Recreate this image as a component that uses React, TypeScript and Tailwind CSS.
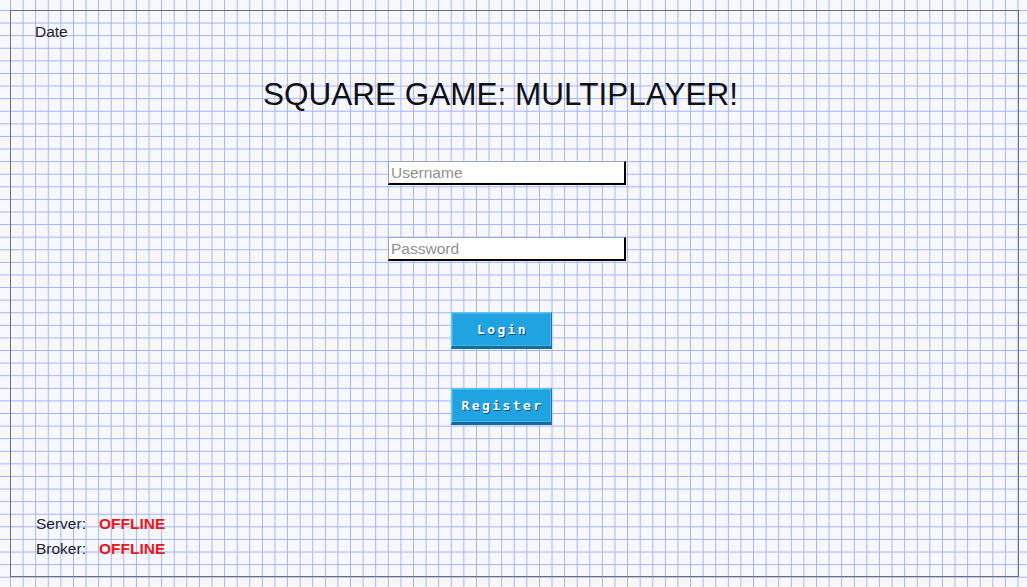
const GRID =
  "bg-[#f7f8fe] bg-[linear-gradient(to_right,#a3b2fa_1px,transparent_1px),linear-gradient(to_bottom,#a3b2fa_1px,transparent_1px)] bg-[size:12.6px_12.6px] bg-[position:10px_10px]";

const SANS = "font-['Liberation_Sans',Arial,sans-serif]";

function TextInput({ placeholder, type }: { placeholder: string; type: string }) {
  return (
    <input
      type={type}
      placeholder={placeholder}
      className={`block h-[24px] w-[238px] border-t border-l border-r-2 border-b-2 border-t-[#9aa3c8] border-l-[#9aa3c8] border-r-black border-b-black bg-white px-[2px] text-[15.5px] text-black outline-none placeholder:text-[#8f8f8f] ${SANS}`}
    />
  );
}

function PixelButton({ label }: { label: string }) {
  return (
    <button
      type="button"
      className="flex h-[37px] w-[101px] items-center justify-center border border-[#5cc4f3] border-r-[#1f79ab] border-b-[3px] border-b-[#186a9a] bg-[#1fa4e1] pl-[2px] font-['DejaVu_Sans_Mono',monospace] text-[13px] font-bold leading-none tracking-[2.4px] text-white shadow-[inset_0_0_0_1px_#40b5ec] [text-shadow:1px_1px_0_#0b4d75]"
    >
      {label}
    </button>
  );
}

function StatusRow({ label, value }: { label: string; value: string }) {
  return (
    <div className="flex leading-[25px]">
      <span className="w-[63px] text-[#1f1f1f]">{label}</span>
      <span className="font-bold text-[#f01414]">{value}</span>
    </div>
  );
}

export default function App() {
  return (
    <div className={`h-[587px] w-full overflow-hidden pl-[10px] pt-[10px] ${GRID}`}>
      <div className={`flex h-[567px] w-[1009px] flex-col border border-[#6e6e6e] ${SANS}`}>
        <div className="ml-[24px] mt-[12px] text-[15.5px] leading-[18px] text-[#1f1f1f]">Date</div>

        <h1 className="mt-[35px] pr-[28px] text-center text-[31.5px] leading-[36px] font-normal text-[#111]">
          SQUARE GAME: MULTIPLAYER!
        </h1>

        <form className="ml-[377px] mt-[49px] flex flex-col">
          <TextInput placeholder="Username" type="text" />
          <div className="mt-[52px]">
            <TextInput placeholder="Password" type="password" />
          </div>
          <div className="ml-[63px] mt-[51px] flex flex-col gap-[39px]">
            <PixelButton label="Login" />
            <PixelButton label="Register" />
          </div>
        </form>

        <div className="ml-[25px] mt-auto pb-[15px] text-[15.5px]">
          <StatusRow label="Server:" value="OFFLINE" />
          <StatusRow label="Broker:" value="OFFLINE" />
        </div>
      </div>
    </div>
  );
}
